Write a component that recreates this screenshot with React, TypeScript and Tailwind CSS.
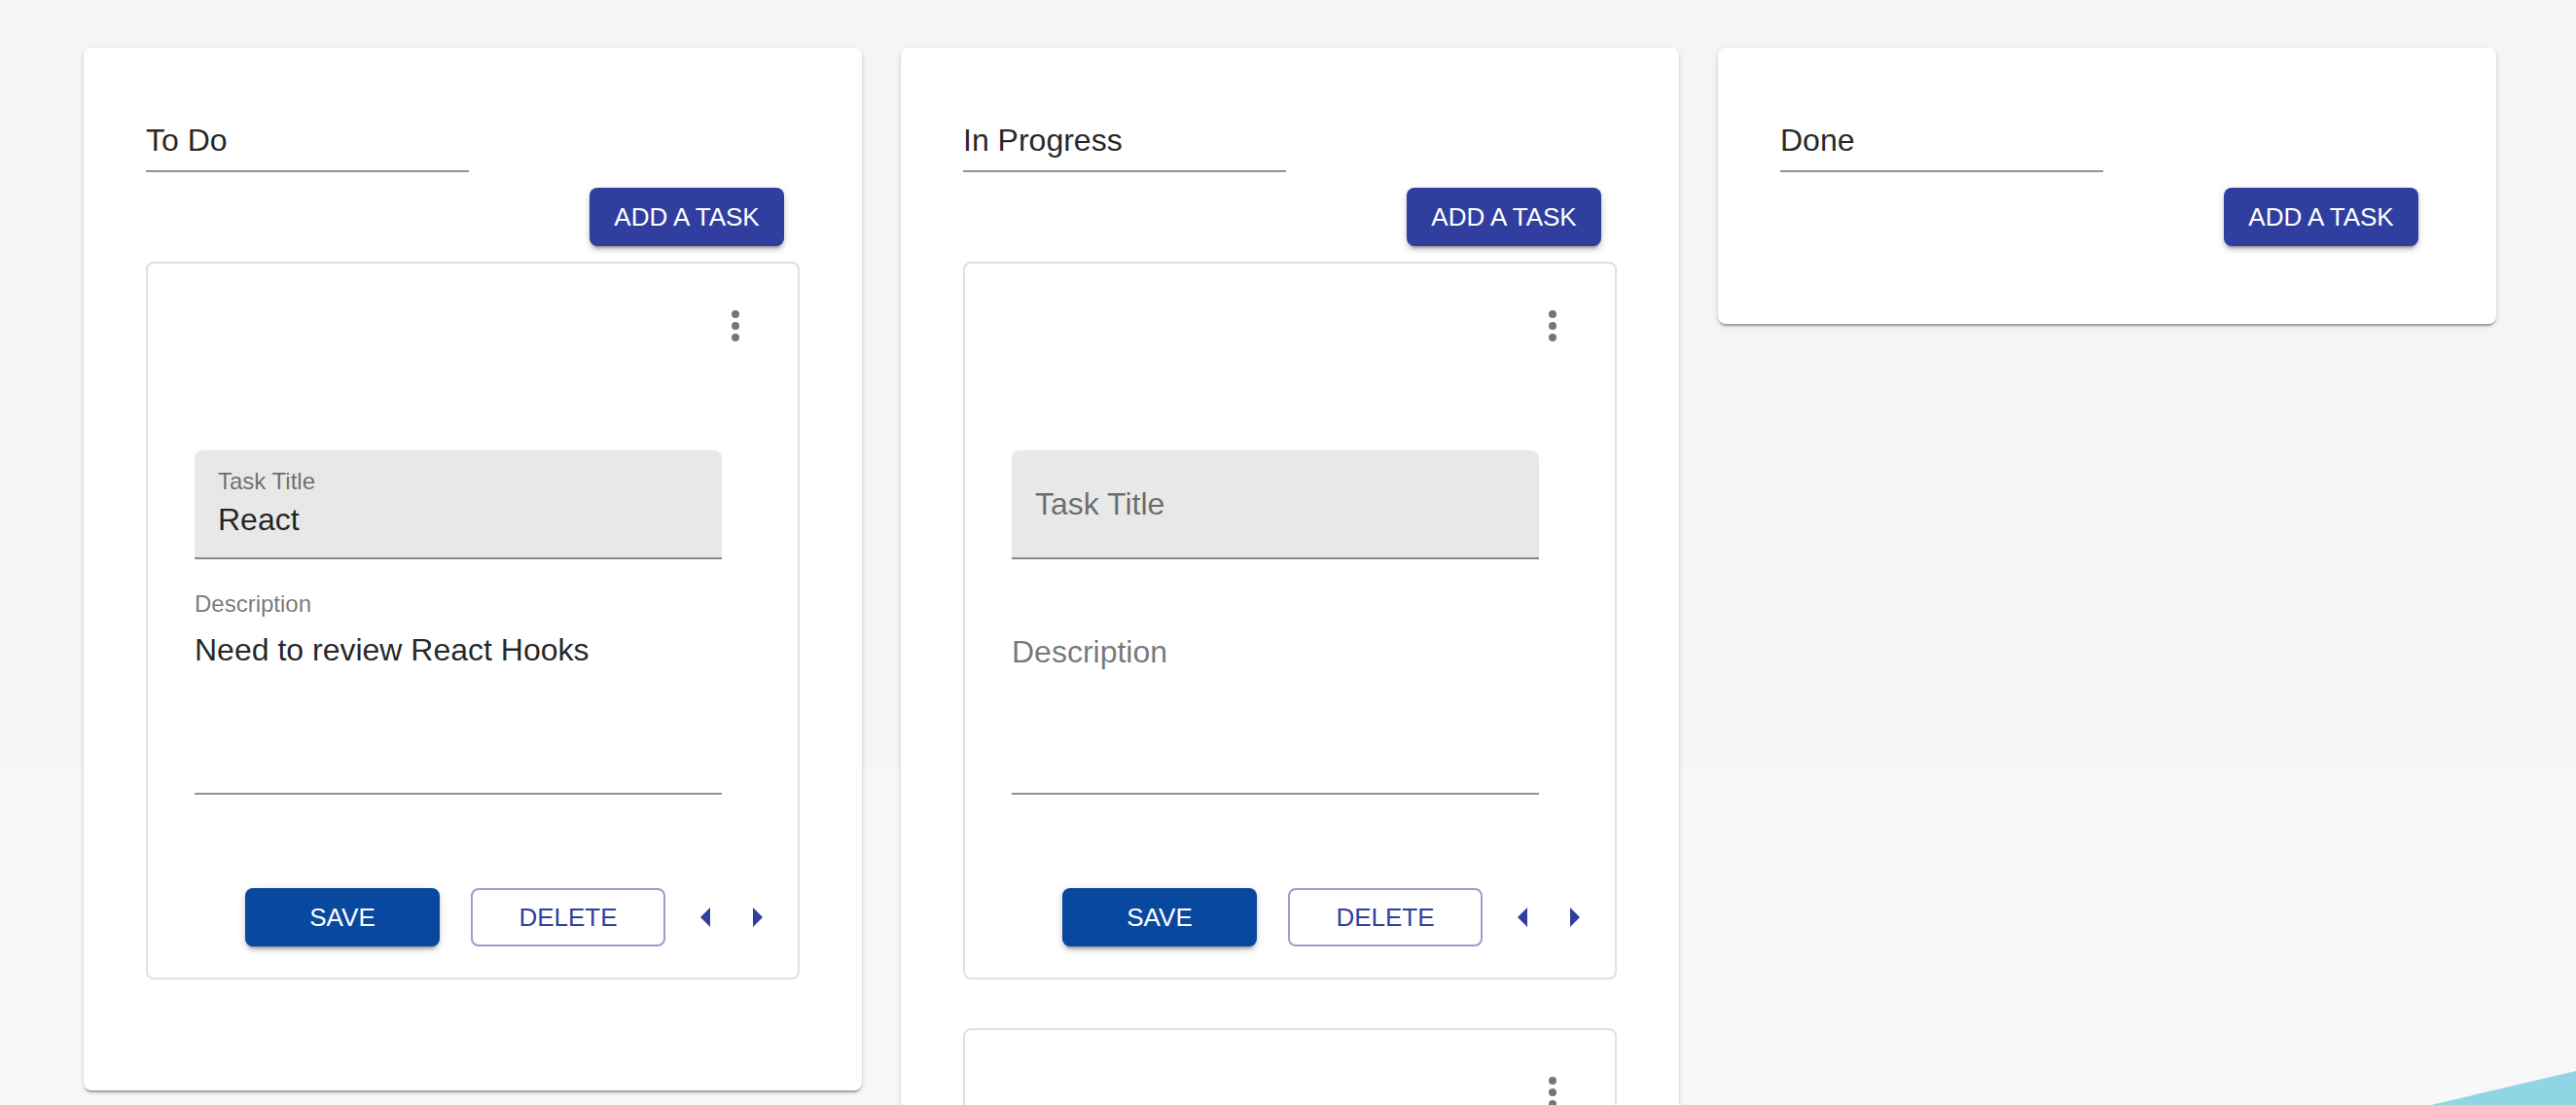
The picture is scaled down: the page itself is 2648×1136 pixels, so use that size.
import { useId, useState } from "react";

type Task = { id: number; title: string; description: string };
type ColumnData = { id: number; name: string; tasks: Task[] };

const columns: ColumnData[] = [
  {
    id: 1,
    name: "To Do",
    tasks: [{ id: 1, title: "React", description: "Need to review React Hooks" }],
  },
  {
    id: 2,
    name: "In Progress",
    tasks: [
      { id: 2, title: "", description: "" },
      { id: 3, title: "", description: "" },
    ],
  },
  { id: 3, name: "Done", tasks: [] },
];

const raised =
  "shadow-[0_6px_2px_-4px_rgba(0,0,0,0.2),0_4px_4px_0_rgba(0,0,0,0.14),0_2px_10px_0_rgba(0,0,0,0.12)]";
const buttonBase =
  "flex h-[60px] w-[200px] shrink-0 cursor-pointer items-center justify-center rounded-lg text-[26px] leading-[46px] uppercase whitespace-nowrap";

function MoreIcon() {
  return (
    <svg className="size-12" viewBox="0 0 24 24" fill="currentColor" aria-hidden="true">
      <circle cx="12" cy="6" r="2" />
      <circle cx="12" cy="12" r="2" />
      <circle cx="12" cy="18" r="2" />
    </svg>
  );
}

function ArrowIcon({ path }: { path: string }) {
  return (
    <svg className="size-12" viewBox="0 0 24 24" fill="currentColor" aria-hidden="true">
      <path d={path} />
    </svg>
  );
}

function TitleField({ initial }: { initial: string }) {
  const id = useId();
  const [value, setValue] = useState(initial);
  return (
    <div className="relative">
      <input
        id={id}
        type="text"
        value={value}
        onChange={(e) => setValue(e.target.value)}
        className="block h-28 w-full rounded-t-lg border-b-2 border-[#868686] bg-[#e8e8e8] px-6 pt-[52px] pb-5 text-[32px] leading-[38px] outline-none"
      />
      <label
        htmlFor={id}
        className={
          value
            ? "pointer-events-none absolute top-[18px] left-6 text-2xl leading-7 text-black/54"
            : "pointer-events-none absolute top-9 left-6 text-[32px] leading-[38px] text-black/54"
        }
      >
        Task Title
      </label>
    </div>
  );
}

function DescriptionField({ initial }: { initial: string }) {
  const id = useId();
  const [value, setValue] = useState(initial);
  return (
    <div className="relative pt-10">
      <textarea
        id={id}
        rows={4}
        value={value}
        onChange={(e) => setValue(e.target.value)}
        className="block h-[170px] w-full resize-none border-b-2 border-[#949494] pt-0.5 text-[32px] leading-[38px] outline-none"
      />
      <label
        htmlFor={id}
        className={
          value
            ? "pointer-events-none absolute top-0 left-0 text-2xl leading-7 text-black/54"
            : "pointer-events-none absolute top-11 left-0 text-[32px] leading-[38px] text-black/54"
        }
      >
        Description
      </label>
    </div>
  );
}

function TaskCard({ task }: { task: Task }) {
  return (
    <article className="mb-[50px] rounded-lg border-2 border-[#e0e0e0] bg-white">
      <header className="flex justify-end px-4 pt-4">
        <button type="button" aria-label="Task options" className="cursor-pointer rounded-full p-6 text-black/54">
          <MoreIcon />
        </button>
      </header>
      <div className="flex flex-col gap-8 pt-20 pr-[78px] pl-12">
        <TitleField initial={task.title} />
        <DescriptionField initial={task.description} />
      </div>
      <footer className="flex items-center justify-end pt-24 pr-[18px] pb-8 text-[#303f9f]">
        <button type="button" className={`${buttonBase} ${raised} mr-8 bg-[#09489f] text-white`}>
          Save
        </button>
        <button type="button" className={`${buttonBase} mr-[18px] border-2 border-[#303f9f]/50`}>
          Delete
        </button>
        <div className="flex gap-1">
          <button type="button" aria-label="Move left" className="cursor-pointer">
            <ArrowIcon path="M14 7l-5 5 5 5V7z" />
          </button>
          <button type="button" aria-label="Move right" className="cursor-pointer">
            <ArrowIcon path="M10 17l5-5-5-5v10z" />
          </button>
        </div>
      </footer>
    </article>
  );
}

function Column({ column }: { column: ColumnData }) {
  const [name, setName] = useState(column.name);
  return (
    <section className="min-w-0 rounded-lg bg-white p-16 shadow-[0_4px_2px_-2px_rgba(0,0,0,0.2),0_2px_2px_0_rgba(0,0,0,0.14),0_2px_6px_0_rgba(0,0,0,0.12)]">
      <input
        type="text"
        aria-label="Column name"
        value={name}
        onChange={(e) => setName(e.target.value)}
        className="block h-16 w-[332px] border-b-2 border-[#949494] text-[32px] leading-[38px] outline-none"
      />
      <div className="flex justify-end py-4 pr-4">
        <button type="button" className={`${buttonBase} ${raised} bg-[#303f9f] text-white`}>
          Add a task
        </button>
      </div>
      {column.tasks.map((task) => (
        <TaskCard key={task.id} task={task} />
      ))}
    </section>
  );
}

export default function App() {
  return (
    <div className="relative isolate h-screen overflow-hidden bg-[#f8f8f8] font-['Liberation_Sans',Arial,sans-serif] text-black/87">
      <div className="absolute inset-x-0 top-0 -z-10 h-[789px] bg-[#f5f5f5]" />
      <svg className="absolute right-0 bottom-0 -z-10 h-[35px] w-[149px]" viewBox="0 0 149 35" aria-hidden="true">
        <path d="M0 35L149 0V35Z" fill="#90d5e4" />
      </svg>
      <main className="grid h-full grid-cols-3 items-start gap-10 overflow-y-auto pt-[49px] pr-[82px] pb-16 pl-[86px] [scrollbar-width:none]">
        {columns.map((column) => (
          <Column key={column.id} column={column} />
        ))}
      </main>
    </div>
  );
}
